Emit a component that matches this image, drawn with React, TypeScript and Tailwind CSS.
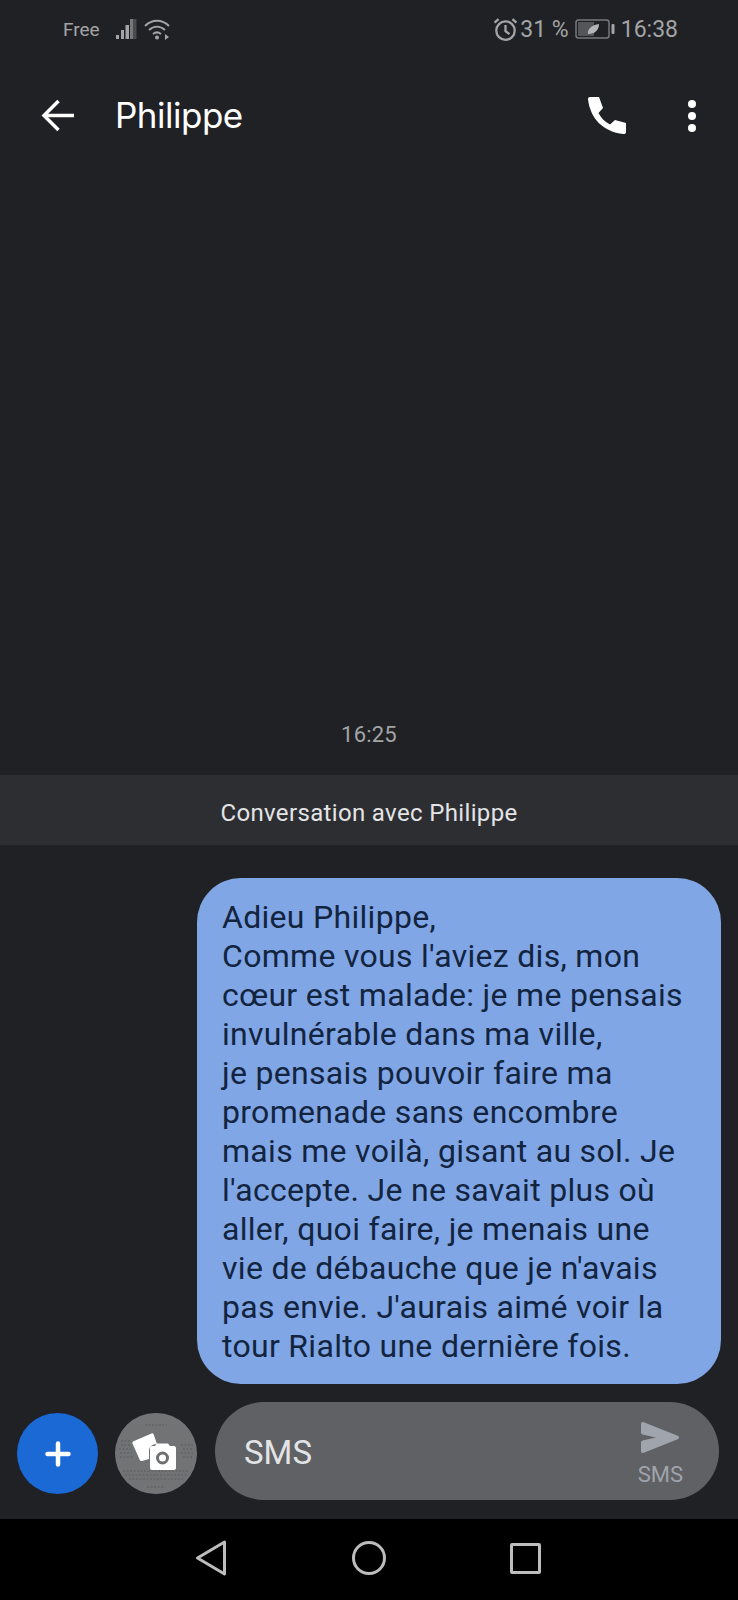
import React from 'react';

const lines = [
  'Adieu Philippe,',
  "Comme vous l'aviez dis, mon",
  'cœur est malade: je me pensais',
  'invulnérable dans ma ville,',
  'je pensais pouvoir faire ma',
  'promenade sans encombre',
  'mais me voilà, gisant au sol. Je',
  "l'accepte. Je ne savait plus où",
  'aller, quoi faire, je menais une',
  'vie de débauche que je n\'avais',
  "pas envie. J'aurais aimé voir la",
  'tour Rialto une dernière fois.',
];

const StatusBar = () => (
  <div className="h-[60px] shrink-0 pl-[63px] pr-[60px] pt-[12px] flex justify-between items-start text-[#a3a4a6]">
    <div className="flex items-center h-[34px]">
      <span className="text-[19px] leading-none">Free</span>
      <svg className="ml-[15px]" width="24" height="24" viewBox="0 0 24 24">
        <rect x="1" y="18" width="3" height="4" fill="#a3a4a6" />
        <rect x="6" y="13" width="3" height="9" fill="#a3a4a6" />
        <rect x="10.500" y="8" width="3.500" height="14" fill="#a3a4a6" />
        <rect x="15" y="2" width="3.500" height="20" fill="#77787a" />
        <rect x="18.500" y="2" width="3" height="20" fill="#4a4b4d" />
      </svg>
      <svg className="ml-[5px]" width="26" height="24" viewBox="0 0 26 24" fill="none" stroke="#a3a4a6" strokeWidth="2">
        <path d="M1 9c7-7 17-7 24 0" />
        <path d="M5 13c5-4.500 11-4.500 16 0" />
        <path d="M9 17c2.500-2 5.500-2 8 0" />
        <circle cx="13" cy="20.500" r="2" fill="#a3a4a6" stroke="none" />
        <path d="M21 17v6l4-3z" fill="#a3a4a6" stroke="none" />
      </svg>
    </div>
    <div className="flex items-center h-[34px]">
      <svg width="23" height="23" viewBox="1 1 20 20" fill="none" stroke="#a3a4a6" strokeWidth="2">
        <circle cx="11" cy="12" r="8" />
        <path d="M11 7v5.500l3.500 2.500" />
        <path d="M1.500 5 5 2M20.500 5 17 2" />
      </svg>
      <span className="ml-[3px] text-[23px] leading-none">31 %</span>
      <svg className="ml-[6px]" width="40" height="20" viewBox="0 0 40 20">
        <rect x="1" y="1" width="33" height="18" rx="2.500" fill="none" stroke="#77787a" strokeWidth="1.500" />
        <rect x="3" y="3" width="16" height="14" fill="#55565a" />
        <path d="M13 15c-1-5 4-9 11-10 0 6-4 10-11 10z" fill="#b4b5b7" />
        <rect x="36.500" y="5" width="3" height="10" rx="1" fill="#a3a4a6" />
      </svg>
      <span className="ml-[6px] text-[23px] leading-none">16:38</span>
    </div>
  </div>
);

const Header = () => (
  <div className="h-[111px] shrink-0 pl-[41px] pr-[40px] flex items-center text-white">
    <svg width="34" height="34" viewBox="0 0 34 34" fill="none" stroke="white" strokeWidth="3.500">
      <path d="M33 16.500H3" />
      <path d="M17.500 2 3 16.500 17.500 31" />
    </svg>
    <div className="ml-[40px] flex-1 text-[35px] leading-none font-['Inter',sans-serif] tracking-[-0.5px]">Philippe</div>
    <svg width="38" height="37" viewBox="0 0 38 37" fill="white">
      <path d="M2 0h9l4 11-4.500 5C13 21 17 25 22 27.500L27 23l11 3v9c0 1.500-1 2-2.500 2C15 35 2 21 0 2 0 .800.800 0 2 0z" />
    </svg>
    <svg className="ml-[60px]" width="12" height="34" viewBox="0 0 12 34" fill="white">
      <circle cx="6" cy="5" r="4" />
      <circle cx="6" cy="17" r="4" />
      <circle cx="6" cy="29" r="4" />
    </svg>
  </div>
);

// photo-picker thumbnail: a scanned page behind the gallery/camera glyph
const PhotoThumb = () => (
  <svg width="82" height="81" viewBox="0 0 82 81">
    <g fill="none" stroke="#5c5d5f" strokeWidth="1.500" strokeDasharray="2 1.500" opacity="0.7">
      <path d="M30 12h22" />
      <path d="M6 28h10M6 32h10M4 36h12M5 40h12M5 44h14M66 32h12M68 36h10M66 40h12M68 44h10" />
      <path d="M8 58h66M10 62h62M14 66h54" />
      <path d="M32 74h18" />
    </g>
    <path d="M19 28 36.500 20.500c1-.4 1.800 0 2.200 1L42 31c-5 0-8 3-8 7v8l-7 2c-1 .3-1.800-.1-2.200-1L17.500 30.500c-.4-1 0-2 1.500-2.500z" fill="white" />
    <path d="M35 35c0-1 .8-2 2-2h3l2-2.500h11l2 2.500h4c1 0 2 1 2 2v20c0 1-1 2-2 2H37c-1.200 0-2-1-2-2z" fill="white" />
    <circle cx="47.500" cy="45" r="5" fill="none" stroke="#6f7072" strokeWidth="3" />
  </svg>
);

const Composer = () => (
  <div className="h-[135px] shrink-0 pl-[17px] pr-[19px] pt-[18px] flex items-start">
    <div className="mt-[11px] w-[81px] h-[81px] rounded-full bg-[#1a69d4] flex items-center justify-center">
      <svg width="26" height="26" viewBox="0 0 26 26" fill="none" stroke="white" strokeWidth="4.500" strokeLinecap="round">
        <path d="M13 2.500v21M2.500 13h21" />
      </svg>
    </div>
    <div className="mt-[11px] ml-[17px] w-[82px] h-[81px] rounded-full bg-[#737476] overflow-hidden">
      <PhotoThumb />
    </div>
    <div className="ml-[18px] flex-1 h-[98px] rounded-full bg-[#5f6164] pl-[29px] pr-[36px] flex items-center justify-between">
      <span className="text-[33px] leading-none text-[#e3e4e6] pt-[2px]">SMS</span>
      <div className="flex flex-col items-center pt-[5px]">
        <svg width="40" height="33" viewBox="0 0 40 33" fill="#a0a4ac" stroke="#a0a4ac" strokeWidth="4" strokeLinejoin="round">
          <path d="M3 3 37 16.500 3 30v-8.500l22-5-22-5z" />
        </svg>
        <span className="mt-[10px] text-[22px] leading-none text-[#a0a4ac]">SMS</span>
      </div>
    </div>
  </div>
);

const NavBar = () => (
  <div className="h-[81px] shrink-0 bg-black flex items-center pb-[3px] pl-[195px] pr-[197px] justify-between">
    <svg width="32" height="36" viewBox="0 0 32 36" fill="none" stroke="#bdbdbd" strokeWidth="3" strokeLinejoin="round">
      <path d="M29.500 2 2.500 18l27 16z" />
    </svg>
    <svg width="34" height="34" viewBox="0 0 34 34" fill="none" stroke="#bdbdbd" strokeWidth="3">
      <circle cx="17" cy="17" r="15.500" />
    </svg>
    <div className="w-[31px] h-[31px] border-[3px] border-[#bdbdbd] rounded-[2px]" />
  </div>
);

export default function App() {
  return (
    <div className="w-[738px] h-[1600px] bg-[#202125] flex flex-col overflow-hidden font-['Roboto',sans-serif]">
      <StatusBar />
      <Header />
      <div className="flex-1 flex flex-col justify-end">
        <div className="text-center text-[22px] leading-none text-[#a3a4a6] mb-[29px] tracking-[0.2px]">16:25</div>
        <div className="h-[70px] pt-[6px] bg-[#2d2e32] flex items-center justify-center text-[24px] text-[#e3e4e6] tracking-[0.35px]">
          Conversation avec Philippe
        </div>
        <div className="mt-[33px] ml-[197px] mr-[17px] h-[506px] rounded-[44px] bg-[#80a6e6] pl-[25px] pt-[20px] text-[32px] leading-[39px] tracking-[0.3px] text-[#13243f]">
          {lines.map((line) => (
            <div key={line} className="whitespace-nowrap">{line}</div>
          ))}
        </div>
      </div>
      <Composer />
      <NavBar />
    </div>
  );
}
